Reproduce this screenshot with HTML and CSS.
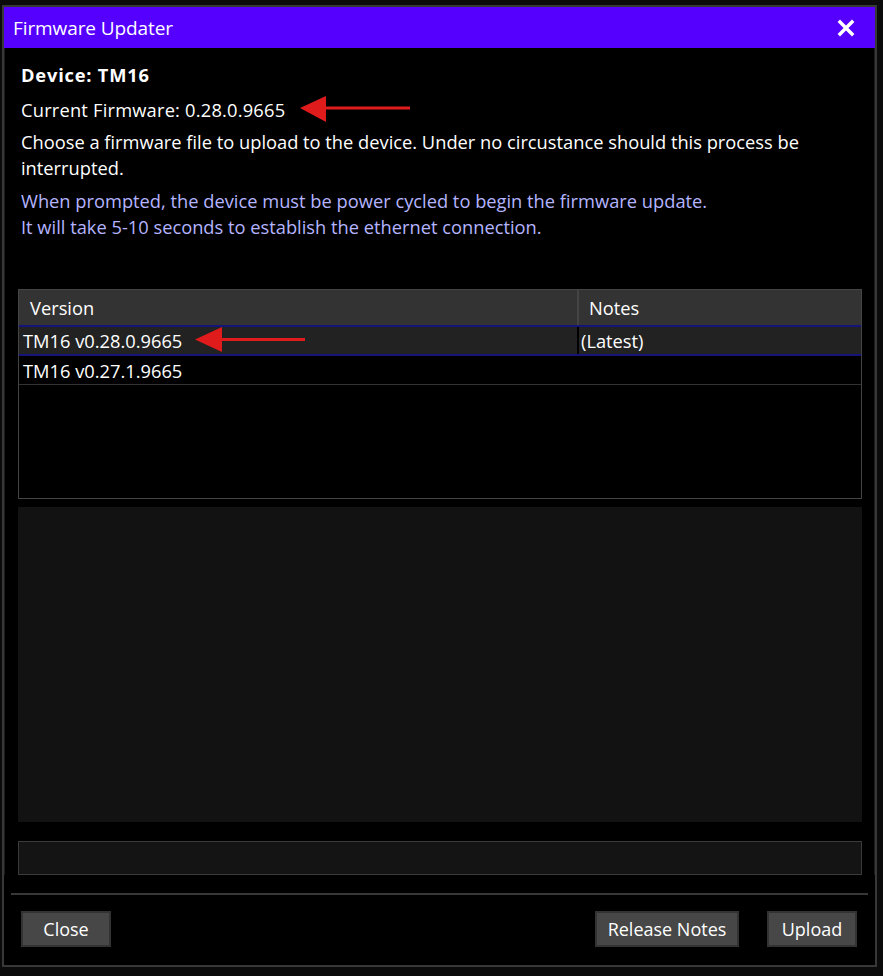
FILE: index.html
```html
<!DOCTYPE html>
<html lang="en">
<head>
    <meta charset="UTF-8">
    <meta name="viewport" content="width=device-width, initial-scale=1.0">
    <title>Firmware Updater</title>
    <link rel="stylesheet" href="styles.css">
</head>
<body>
    <div class="dialog">
        <div class="title-bar">
            <span class="title">Firmware Updater</span>
            <button class="close-x" aria-label="Close">
                <svg width="18" height="18" viewBox="0 0 18 18">
                    <path d="M3 3 L15 15 M15 3 L3 15" stroke="#fff" stroke-width="3.4" stroke-linecap="square"/>
                </svg>
            </button>
        </div>
        <div class="dialog-body">
            <p class="line bold">Device: TM16</p>
            <p class="line with-arrow">Current Firmware: 0.28.0.9665
                <svg class="arrow" width="112" height="28" viewBox="0 0 112 28">
                    <path d="M24 10.5 H110 V13.5 H24 Z" fill="#e01b1b"/>
                    <path d="M0 12 L26 0 L26 26 Z" fill="#e01b1b"/>
                </svg>
            </p>
            <div class="para">
                <p class="line">Choose a firmware file to upload to the device. Under no circustance should this process be interrupted.</p>
            </div>
            <div class="para note">
                <p class="line">When prompted, the device must be power cycled to begin the firmware update.</p>
                <p class="line">It will take 5-10 seconds to establish the ethernet connection.</p>
            </div>

            <div class="versions">
                <div class="row head">
                    <div class="cell ver">Version</div>
                    <div class="cell notes">Notes</div>
                </div>
                <div class="row selected">
                    <div class="cell ver">TM16 v0.28.0.9665
                        <svg class="arrow" width="112" height="28" viewBox="0 0 112 28">
                            <path d="M24 11 H110 V14 H24 Z" fill="#e01b1b"/>
                            <path d="M0 12.5 L27 0 L27 25 Z" fill="#e01b1b"/>
                        </svg>
                    </div>
                    <div class="cell notes">(Latest)</div>
                </div>
                <div class="row last">
                    <div class="cell ver">TM16 v0.27.1.9665</div>
                    <div class="cell notes"></div>
                </div>
            </div>

            <div class="log"></div>
            <div class="file-path"></div>
        </div>
        <div class="footer">
            <button class="btn">Close</button>
            <div class="spacer"></div>
            <button class="btn wide">Release Notes</button>
            <button class="btn">Upload</button>
        </div>
    </div>
</body>
</html>
```

FILE: styles.css
```css
body{
    margin: 0;
    background: #0b0b0b;
    font-family: "Open Sans", "Noto Sans", sans-serif;
    color: #fff;
}

.dialog{
    width: 871px;
    height: 958px;
    margin: 5px 0 0 2px;
    border: 2px solid #383838;
    background: #000;
    display: flex;
    flex-direction: column;
}

.title-bar{
    background: #5500ff;
    height: 41px;
    display: flex;
    align-items: center;
    justify-content: space-between;
    padding: 0 0 0 9px;
}
.title{
    font-size: 19px;
    font-stretch: 88%;
    letter-spacing: -0.1px;
}
.close-x{
    background: none;
    border: none;
    padding: 0;
    width: 40px;
    height: 40px;
    display: flex;
    align-items: center;
    justify-content: center;
    margin-right: 9px;
}

.dialog-body{
    padding: 14px 12px 0 13px;
    border-left: 1px solid #1c1c1c;
    border-right: 1px solid #1c1c1c;
    font-size: 18.3px;
}

.line{
    margin: 0;
    line-height: 26px;
    padding-left: 3px;
}
.bold{
    font-weight: bold;
    letter-spacing: 0.8px;
}
.with-arrow{
    margin-top: 8px;
    display: flex;
    align-items: center;
    letter-spacing: 0.2px;
}
.with-arrow .arrow{
    margin-left: 15px;
}
.para{
    margin-top: 5px;
}
.note{
    margin-top: 7px;
    color: #b4b4ff;
}

/* 버전 목록 */
.versions{
    margin-top: 49px;
    height: 208px;
    border: 1px solid #444;
    background: #000;
}
.row{
    display: flex;
}
.row .cell{
    box-sizing: border-box;
    display: flex;
    align-items: center;
}
.row .ver{
    width: 560px;
}
.row .notes{
    flex: 1;
}
.head{
    background: #333;
    height: 35px;
    border-bottom: 2px solid #14147a;
}
.head .ver{
    padding-left: 11px;
    border-right: 2px solid #444;
}
.head .notes{
    padding-left: 10px;
}
.selected{
    background: #222;
    height: 27px;
    border-bottom: 2px solid #14147a;
}
.selected .ver{
    border-right: 2px solid #000;
}
.selected .cell,
.last .cell{
    padding-left: 4px;
}
.selected .notes{
    padding-left: 2px;
}
.selected .arrow{
    margin-left: 13px;
}
.last{
    height: 28px;
    border-bottom: 1px solid #333;
}

.log{
    margin-top: 8px;
    height: 315px;
    background: #121212;
}
.file-path{
    margin-top: 19px;
    height: 32px;
    background: #141414;
    border: 1px solid #3a3a3a;
}

.footer{
    margin: 18px 7px 0 7px;
    border-top: 2px solid #383838;
    padding: 16px 11px 0 10px;
    display: flex;
    gap: 28px;
}
.spacer{
    flex: 1;
}
.btn{
    height: 36px;
    width: 90px;
    background: #474747;
    border: 2px solid #333;
    color: #fff;
    font-family: "Open Sans", "Noto Sans", sans-serif;
    font-size: 18px;
    padding: 0;
}
.btn.wide{
    width: 144px;
}
```
